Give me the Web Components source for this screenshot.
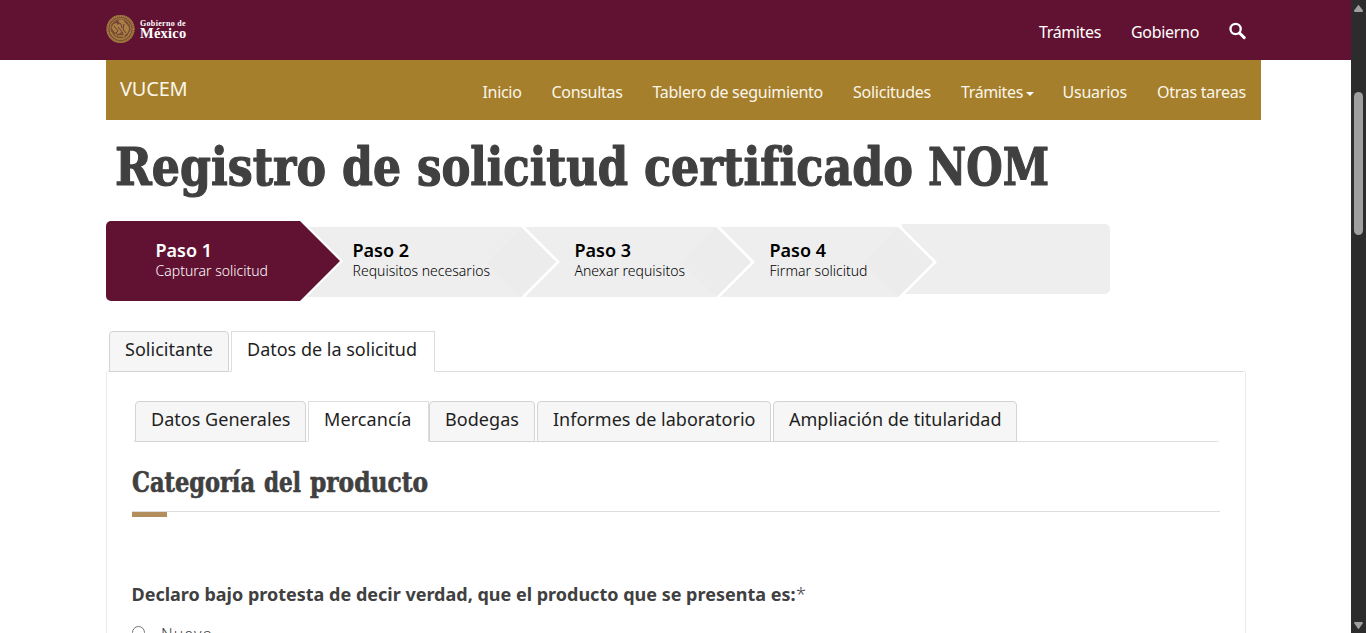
<!DOCTYPE html>
<html lang="es">
<head>
<meta charset="utf-8">
<title>VUCEM</title>
<style>
html,body{margin:0;height:100%;overflow:hidden;background:#fff}
body{font-family:"Noto Sans","Open Sans",sans-serif;color:#404041}
</style>
</head>
<body>
<vu-app></vu-app>
<script>
const define = (name, html, setup) => customElements.define(name, class extends HTMLElement {
  connectedCallback() {
    if (!this.shadowRoot) {
      this.attachShadow({mode: 'open'}).innerHTML = html;
    }
    if (setup) setup(this, this.shadowRoot);
  }
});

/* Text whose tracking is adjusted so that it fills the width given in "w". */
define('fit-text', `<style>:host{display:inline-block;white-space:nowrap;flex:none}span{display:inline-block}</style><span><slot></slot></span>`, (el, root) => {
  const span = root.querySelector('span');
  const w = parseFloat(el.getAttribute('w'));
  span.style.letterSpacing = '0';
  const natural = span.getBoundingClientRect().width;
  span.style.letterSpacing = ((w - natural) / el.textContent.trim().length) + 'px';
  el.style.width = w + 'px';
});

/* Display heading: words keep their own widths, given in "words" as x,width pairs. */
define('display-title', `<style>:host{display:block}svg{display:block;overflow:visible}text{font-family:"DejaVu Serif Condensed","DejaVu Serif",serif;font-stretch:condensed;font-weight:700;fill:#404041;stroke:#404041;stroke-linejoin:round}</style><svg><text x="0" lengthAdjust="spacingAndGlyphs"></text></svg>`, (el, root) => {
  const [w, h, base, size] = ['w', 'h', 'base', 'size'].map(a => el.getAttribute(a));
  const svg = root.querySelector('svg'), t = root.querySelector('text');
  svg.setAttribute('width', w); svg.setAttribute('height', h);
  const spans = el.getAttribute('words').split(' ').map(p => p.split(','));
  el.getAttribute('label').split(' ').forEach((word, i) => {
    const n = i ? t.cloneNode() : t;
    n.setAttribute('x', spans[i][0]);
    n.setAttribute('y', base);
    n.setAttribute('textLength', spans[i][1]);
    n.style.fontSize = size + 'px';
    n.style.strokeWidth = (size / 45) + 'px';
    n.textContent = word;
    if (i) svg.append(n);
  });
});

define('gob-logo', `<style>
:host{display:flex;align-items:center;gap:5px;height:30px}
.t{display:flex;flex-direction:column;color:#fff;font-family:"Liberation Serif",serif;font-weight:700;padding-top:1px}
.a{font-size:8px;line-height:8px}.b{font-size:14.500px;line-height:11px}
</style>
<svg width="29" height="30" viewBox="0 0 29 30" fill="none" stroke="#a57f3f">
<circle cx="14.5" cy="15" r="14" fill="#7b4a35" stroke="none"/>
<circle cx="14.5" cy="15" r="13" stroke-width="2.2" stroke-dasharray="1.5 .5"/>
<circle cx="14.5" cy="15" r="10.500" stroke-width=".8" stroke="#b48b47"/>
<path d="M13 6c3-1 5 0 5.500 2l3 3c2 2 2 5 0 8l-3 2-3-3-3 2-4-2-3-4 2-4 3-1 1 2 2-1-1-2z" fill="#a98043" stroke="none"/>
<path d="M11 8l4 2 1 4M18 10l-1 5 3 4M8 12l4 5-2 2M12 13l5 6" stroke="#6c2c38" stroke-width=".9"/>
<path d="M5 18c2 5 6 7 9.500 7s8-2 9.500-7M9 20l2 2M19 20l-2 3M12 22h5" stroke-width="1.500"/>
</svg>
<div class="t"><fit-text class="a" w="46">Gobierno de</fit-text><fit-text class="b" w="46.500">México</fit-text></div>`);

define('gob-header', `<style>
:host{display:block;background:#611232;height:60px}
.in{display:flex;justify-content:space-between;padding:0 105px 0 106px}
gob-logo{margin-top:14px}
nav{display:flex;gap:30px;color:#fff;font-size:16px;font-weight:400;line-height:24px;padding-top:20px}
svg{margin-top:2px}
</style><div class="in"><gob-logo></gob-logo><nav><fit-text w="62">Trámites</fit-text><fit-text w="68">Gobierno</fit-text>
<svg width="17" height="18" viewBox="0 0 17 18" fill="none" stroke="#fff"><circle cx="6.600" cy="7" r="5.100" stroke-width="2.300"/><path d="M10.500 11l4.700 4.600" stroke-width="3" stroke-linecap="round"/></svg></nav></div>`);

define('vu-nav', `<style>
:host{display:flex;justify-content:space-between;background:#a57f2c;height:60px;width:1155px;margin-left:106px;color:#fbf6ea;font-weight:400;box-sizing:border-box;padding:0 15px 0 14px}
.brand{font-size:20px;line-height:28px;padding-top:15px}
nav{display:flex;gap:30px;font-size:16px;line-height:24px;padding-top:20px}
.dd{display:flex;gap:2.500px;margin-right:-1px}
i{width:0;height:0;border:4px solid transparent;border-top-color:#fff;border-bottom:0;margin-top:12px}
</style><fit-text class="brand" w="67.500">VUCEM</fit-text>
<nav><fit-text w="39">Inicio</fit-text><fit-text w="71">Consultas</fit-text><fit-text w="170.500">Tablero de seguimiento</fit-text><fit-text w="78">Solicitudes</fit-text><span class="dd"><fit-text w="62">Trámites</fit-text><i></i></span><fit-text w="64.500">Usuarios</fit-text><fit-text w="89">Otras tareas</fit-text></nav>`);

define('wizard-step', `<style>
:host{display:block;flex:none;box-sizing:border-box;background:conic-gradient(from 45deg at 0 50%,#ececec 90deg,transparent 0) right/70px 70px no-repeat,#eee;color:#000;height:70px;margin-top:6px}
:host([active]){background:#611232;color:#fff;height:80px;margin-top:0;border-radius:5px 0 0 5px}
:host([tail]){background:#eee;margin-top:3px;border-radius:0 5px 5px 0}
.b{display:flex;flex-direction:column;align-items:flex-start;padding-top:13px}
:host([active]) .b{padding-top:19px}
</style><div class="b"><slot name="n"></slot><slot name="l"></slot></div>`);

define('wizard-bar', `<style>
:host{display:flex;height:80px;width:1004px;align-items:flex-start}
[slot=n]{font-weight:600;font-size:18px;line-height:20px}[slot=l]{font-weight:300;font-size:14px;line-height:20px;padding-top:1px}
.s1{width:234px;padding-left:49.500px;clip-path:polygon(0 0,194px 0,100% 50%,194px 100%,0 100%)}
.s2{width:249px;margin-left:-33px;padding-left:45.500px;clip-path:polygon(2px 0,36px 34px,0 100%,214px 100%,100% 50%,214px 0)}
.s3{width:228px;margin-left:-33px;padding-left:51.500px;clip-path:polygon(2px 0,37px 50%,2px 100%,193px 100%,100% 50%,193px 0)}
.s4{width:215px;margin-left:-33px;padding-left:51.500px;clip-path:polygon(2px 0,37px 50%,2px 100%,180px 100%,100% 50%,180px 0)}
.s5{width:208px;margin-left:-31px;clip-path:polygon(0 0,100% 0,100% 100%,3px 100%,35px 38px,0 3px)}
</style>
<wizard-step active class="s1"><fit-text slot="n" w="56.500">Paso 1</fit-text><fit-text slot="l" w="112.500">Capturar solicitud</fit-text></wizard-step>
<wizard-step class="s2"><fit-text slot="n" w="56.500">Paso 2</fit-text><fit-text slot="l" w="137.500">Requisitos necesarios</fit-text></wizard-step>
<wizard-step class="s3"><fit-text slot="n" w="56.500">Paso 3</fit-text><fit-text slot="l" w="110.500">Anexar requisitos</fit-text></wizard-step>
<wizard-step class="s4"><fit-text slot="n" w="56.500">Paso 4</fit-text><fit-text slot="l" w="98">Firmar solicitud</fit-text></wizard-step>
<wizard-step tail class="s5"></wizard-step>`);

define('tab-item', `<style>
:host{display:block;flex:none;box-sizing:border-box;height:41px;border:1px solid #d3d3d3;border-radius:4px 4px 0 0;background:#f6f6f6;color:#1f1f1f;font-size:18px;line-height:26px;padding:4px 0 0 15px}
:host([active]){background:#fff;border-radius:0;border-color:#ddd #ddd #fff}
</style><slot></slot>`);

define('tab-strip', `<style>:host{display:block}.r{display:flex;height:40px;border-bottom:1px solid #ddd;border-radius:0 0 3px 3px}</style><div class="r"><slot></slot></div>`);

define('section-title', `<style>:host{display:block;width:1088px}.g{width:35px;height:5px;background:#b38e5d}.r{height:1px;background:#ddd}</style>
<slot></slot><div class="r"></div><div class="g"></div>`);

define('radio-row', `<style>:host{display:flex;font-size:16px;line-height:22px;font-weight:300;gap:16px}
i{box-sizing:border-box;width:13px;height:13px;border:1px solid #767676;border-radius:50%;margin-top:3px;background:#fff}</style><i></i><slot></slot>`);

define('page-scroll', `<style>:host{display:flex;flex-direction:column;align-items:center;width:15px;height:633px;background:#2c2c2c;flex:none}
svg{display:block}.th{width:9px;height:143px;border-radius:5px;background:#9f9f9f;margin-top:80px}.sp{flex:1}</style>
<svg width="9" height="12"><path d="M3.500 6Q4.500 4 5.500 6L9 10.500Q9 12 8 12H1Q0 12 0 10.500Z" fill="#9f9f9f"/></svg><div class="th"></div><div class="sp"></div>
<svg width="9" height="11"><path d="M0 1Q0 0 1 0H8Q9 0 9 1L5.500 6Q4.500 8 3.500 6Z" fill="#9f9f9f"/></svg>`);

define('vu-app', `<style>
:host{display:flex;width:1366px;height:633px;overflow:hidden}
main{width:1351px;flex:none;height:633px;overflow:hidden}
.h1{padding:20px 0 0 115px;height:81px;box-sizing:content-box}
wizard-bar{margin-left:106px}
.outer{margin:30px 105px 0 106px;width:1140px}
.outer tab-strip{margin:0 1px}
.outer tab-item:first-child{margin-left:2px;margin-right:2px}
.panel{border:1px solid #ebebeb;border-top:0;height:300px;box-sizing:border-box;padding:29px 25px 0;overflow:hidden}
.panel tab-strip{width:1086px;margin-left:1px}
section-title{margin-top:24px}
.q{display:flex;font-size:18px;line-height:26px;font-weight:700;margin-top:64px;margin-left:-.5px}
.q span{font-weight:300;margin-left:.5px}
radio-row{margin-top:16px}
</style>
<main><gob-header></gob-header><vu-nav></vu-nav>
<div class="h1"><display-title w="934" h="70" base="45" size="52" words="0,211 227,59 302,211 529,269 813,121" label="Registro de solicitud certificado NOM"></display-title></div>
<wizard-bar></wizard-bar>
<div class="outer"><tab-strip>
<tab-item style="width:120px"><fit-text w="88">Solicitante</fit-text></tab-item>
<tab-item active style="width:204px"><fit-text w="170">Datos de la solicitud</fit-text></tab-item></tab-strip>
<div class="panel"><tab-strip>
<tab-item style="width:171px;margin:0 2px"><fit-text w="139.500">Datos Generales</fit-text></tab-item>
<tab-item active style="width:121px"><fit-text w="87.500">Mercancía</fit-text></tab-item>
<tab-item style="width:106px;margin-right:2px"><fit-text w="74">Bodegas</fit-text></tab-item>
<tab-item style="width:234px;margin-right:2px"><fit-text w="202.500">Informes de laboratorio</fit-text></tab-item>
<tab-item style="width:244px"><fit-text w="212.500">Ampliación de titularidad</fit-text></tab-item></tab-strip>
<section-title><display-title w="296" h="45" base="25.500" size="27" words="0,123 132,37 178,118" label="Categoría del producto"></display-title></section-title>
<div class="q"><fit-text w="664">Declaro bajo protesta de decir verdad, que el producto que se presenta es:</fit-text><span>*</span></div>
<radio-row><fit-text w="52">Nuevo</fit-text></radio-row>
</div></div></main><page-scroll></page-scroll>`);
</script>
</body>
</html>
